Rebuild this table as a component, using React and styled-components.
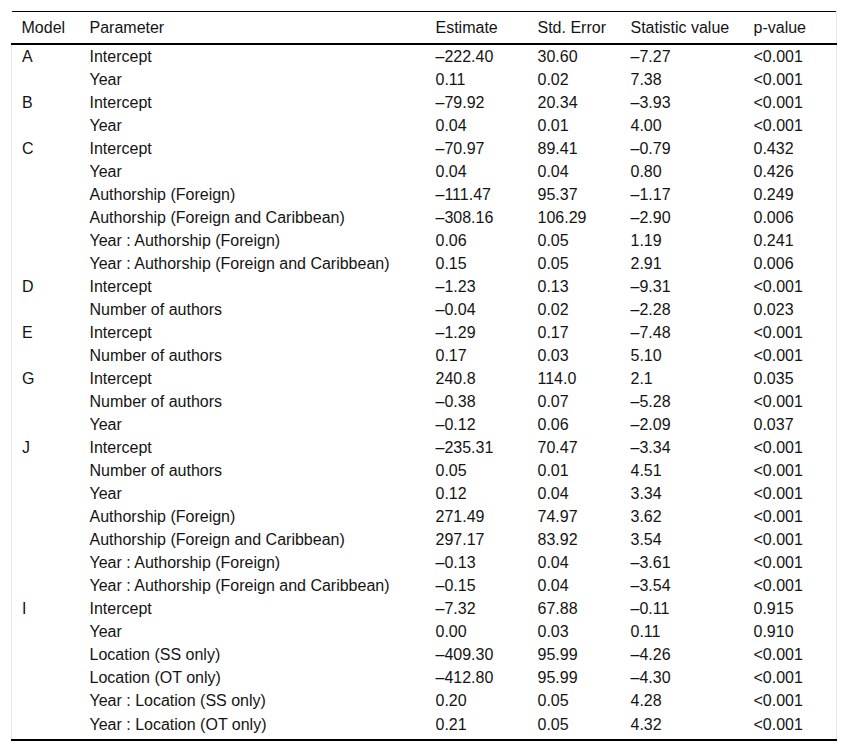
import React from "react";
import styled, { createGlobalStyle } from "styled-components";

const GlobalStyle = createGlobalStyle`
  html, body { margin: 0; padding: 0; background: #fff; }
  body { font-family: "Liberation Sans", Arial, Helvetica, sans-serif; }
`;

const Page = styled.div`
  padding: 11px 11px 0 11px;
`;

const Table = styled.table`
  width: 825px;
  border-collapse: collapse;
  table-layout: fixed;
  font-family: "Liberation Sans", Arial, Helvetica, sans-serif;
  font-size: 16px;
  color: #141414;
  border-top: 1px solid #000;
  border-bottom: 2px solid #000;
`;

const HeadRow = styled.tr`
  border-bottom: 2px solid #000;
`;

const Th = styled.th`
  font-weight: normal;
  text-align: left;
  height: 31px;
  padding: 0 0 0 ${(p) => p.$pl || 10}px;
  vertical-align: middle;
  line-height: 18px;
  white-space: nowrap;
  &:last-child { border-right: 1px solid #e6e6e6; }
`;

const Row = styled.tr``;

const Td = styled.td`
  text-align: left;
  height: ${(p) => (p.$last ? 25 : 23)}px;
  padding: 0 0 ${(p) => (p.$last ? 2 : 0)}px ${(p) => p.$pl || 10}px;
  vertical-align: middle;
  line-height: 18px;
  white-space: nowrap;
  &:first-child { border-left: 1px solid #e6e6e6; }
  &:last-child { border-right: 1px solid #e6e6e6; }
`;

const cols = [68, 346, 102, 93, 123, 93];
const pads = [10, 10, 10, 10, 10, 10];

const M = "\u2013";

const rows = [
  ["A", "Intercept", `${M}222.40`, "30.60", `${M}7.27`, "<0.001"],
  ["", "Year", "0.11", "0.02", "7.38", "<0.001"],
  ["B", "Intercept", `${M}79.92`, "20.34", `${M}3.93`, "<0.001"],
  ["", "Year", "0.04", "0.01", "4.00", "<0.001"],
  ["C", "Intercept", `${M}70.97`, "89.41", `${M}0.79`, "0.432"],
  ["", "Year", "0.04", "0.04", "0.80", "0.426"],
  ["", "Authorship (Foreign)", `${M}111.47`, "95.37", `${M}1.17`, "0.249"],
  ["", "Authorship (Foreign and Caribbean)", `${M}308.16`, "106.29", `${M}2.90`, "0.006"],
  ["", "Year : Authorship (Foreign)", "0.06", "0.05", "1.19", "0.241"],
  ["", "Year : Authorship (Foreign and Caribbean)", "0.15", "0.05", "2.91", "0.006"],
  ["D", "Intercept", `${M}1.23`, "0.13", `${M}9.31`, "<0.001"],
  ["", "Number of authors", `${M}0.04`, "0.02", `${M}2.28`, "0.023"],
  ["E", "Intercept", `${M}1.29`, "0.17", `${M}7.48`, "<0.001"],
  ["", "Number of authors", "0.17", "0.03", "5.10", "<0.001"],
  ["G", "Intercept", "240.8", "114.0", "2.1", "0.035"],
  ["", "Number of authors", `${M}0.38`, "0.07", `${M}5.28`, "<0.001"],
  ["", "Year", `${M}0.12`, "0.06", `${M}2.09`, "0.037"],
  ["J", "Intercept", `${M}235.31`, "70.47", `${M}3.34`, "<0.001"],
  ["", "Number of authors", "0.05", "0.01", "4.51", "<0.001"],
  ["", "Year", "0.12", "0.04", "3.34", "<0.001"],
  ["", "Authorship (Foreign)", "271.49", "74.97", "3.62", "<0.001"],
  ["", "Authorship (Foreign and Caribbean)", "297.17", "83.92", "3.54", "<0.001"],
  ["", "Year : Authorship (Foreign)", `${M}0.13`, "0.04", `${M}3.61`, "<0.001"],
  ["", "Year : Authorship (Foreign and Caribbean)", `${M}0.15`, "0.04", `${M}3.54`, "<0.001"],
  ["I", "Intercept", `${M}7.32`, "67.88", `${M}0.11`, "0.915"],
  ["", "Year", "0.00", "0.03", "0.11", "0.910"],
  ["", "Location (SS only)", `${M}409.30`, "95.99", `${M}4.26`, "<0.001"],
  ["", "Location (OT only)", `${M}412.80`, "95.99", `${M}4.30`, "<0.001"],
  ["", "Year : Location (SS only)", "0.20", "0.05", "4.28", "<0.001"],
  ["", "Year : Location (OT only)", "0.21", "0.05", "4.32", "<0.001"],
];

const headers = ["Model", "Parameter", "Estimate", "Std. Error", "Statistic value", "p-value"];

export default function App() {
  return (
    <>
      <GlobalStyle />
      <Page>
        <Table>
          <colgroup>
            {cols.map((w, i) => (
              <col key={i} style={{ width: w }} />
            ))}
          </colgroup>
          <thead>
            <HeadRow>
              {headers.map((h, i) => (
                <Th key={i} $pl={pads[i]}>{h}</Th>
              ))}
            </HeadRow>
          </thead>
          <tbody>
            {rows.map((r, ri) => (
              <Row key={ri}>
                {r.map((c, ci) => (
                  <Td key={ci} $pl={pads[ci]} $last={ri === rows.length - 1}>
                    {c}
                  </Td>
                ))}
              </Row>
            ))}
          </tbody>
        </Table>
      </Page>
    </>
  );
}
